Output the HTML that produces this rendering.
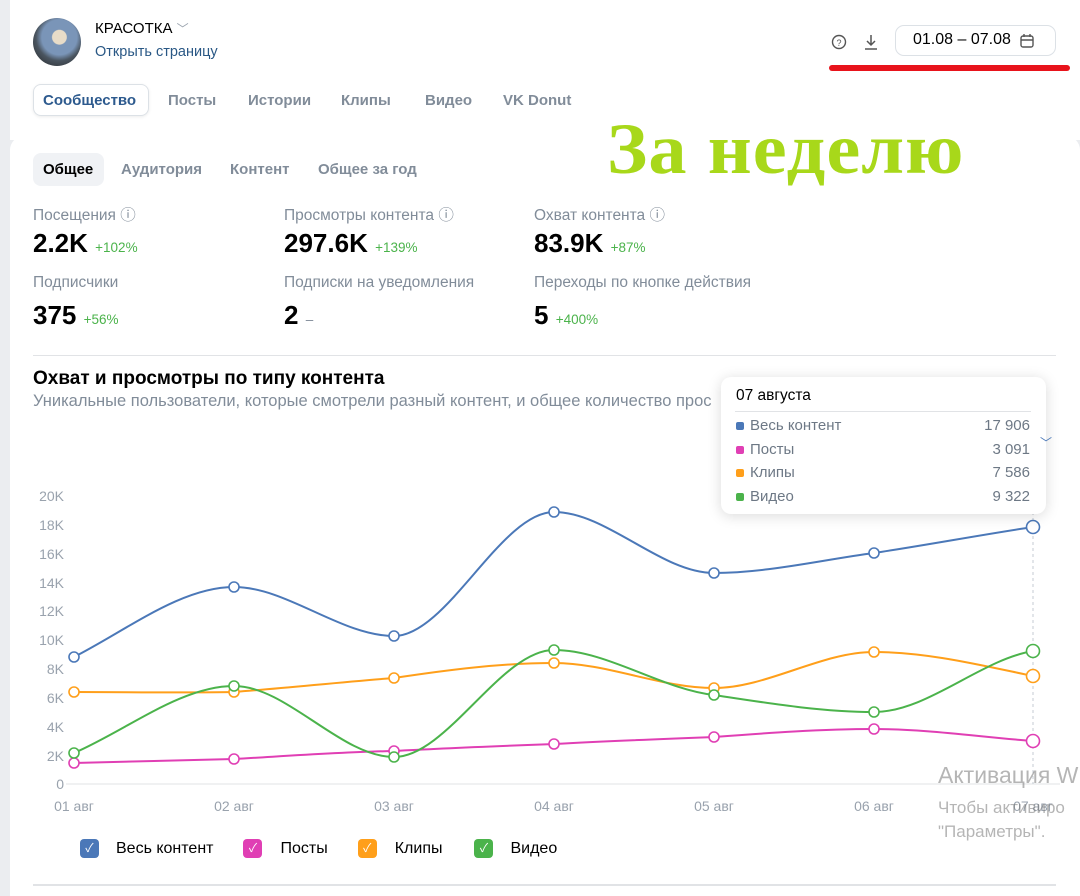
<!DOCTYPE html><html><head><meta charset="utf-8"><style>
*{margin:0;padding:0;box-sizing:border-box}
body{width:1080px;height:892px;overflow:hidden;background:#ebedf0;font-family:"Liberation Sans","Noto Sans CJK SC",sans-serif;position:relative}
.a{position:absolute;white-space:nowrap}
.top{position:absolute;left:10px;top:0;width:1070px;height:140px;background:#fff}
.card{position:absolute;left:10px;top:136px;width:1070px;height:760px;background:#fff;border-radius:14px 14px 0 0}
.g{color:#818c99;font-size:15.5px}
.big{font-size:26px;font-weight:bold;color:#000}
.pc{font-size:13.5px;color:#4bb34b;font-weight:normal}
.tab{font-size:15px;font-weight:bold;color:#818c99}
</style></head><body>
<div class="top"></div>
<div class="card"></div>
<div class="a" style="left:33px;top:18px;width:48px;height:48px;border-radius:50%;background:radial-gradient(circle at 55% 40%,#e8dcc8 0 18%,#7a95b8 20% 45%,#4a5560 60%,#202020 100%)"></div>
<div class="a" style="left:95px;top:20px;font-size:15px;color:#000">КРАСОТКА <span style="color:#99a2ad;font-size:12px">﹀</span></div>
<div class="a" style="left:95px;top:44px;font-size:14.5px;color:#2a5885">Открыть страницу</div>
<div class="a" style="left:33px;top:84px;width:116px;height:32px;border:1px solid #dce1e6;border-radius:8px;box-shadow:0 1px 3px rgba(0,0,0,.08)"></div>
<div class="a tab" style="left:43px;top:92px;color:#2d5a8e">Сообщество</div>
<div class="a tab" style="left:168px;top:92px">Посты</div>
<div class="a tab" style="left:248px;top:92px">Истории</div>
<div class="a tab" style="left:341px;top:92px">Клипы</div>
<div class="a tab" style="left:425px;top:92px">Видео</div>
<div class="a tab" style="left:503px;top:92px">VK Donut</div>
<svg class="a" style="left:830px;top:32px" width="54" height="20"><circle cx="9" cy="10" r="6.5" fill="none" stroke="#555" stroke-width="1.4"/><text x="9" y="14" font-size="9" text-anchor="middle" fill="#555" font-family="Liberation Sans">?</text><path d="M41 3v10M37 9l4 4 4-4M35 17h12" fill="none" stroke="#555" stroke-width="1.5"/></svg>
<div class="a" style="left:895px;top:25px;width:161px;height:31px;border:1px solid #dce1e6;border-radius:9px"></div>
<div class="a" style="left:913px;top:31px;font-size:16px;color:#000">01.08 – 07.08</div>
<svg class="a" style="left:1019px;top:33px" width="16" height="16"><rect x="2" y="3" width="12" height="11" rx="2" fill="none" stroke="#555" stroke-width="1.4"/><path d="M2 7h12M5 1v3M11 1v3" stroke="#555" stroke-width="1.4"/></svg>
<div class="a" style="left:829px;top:65px;width:241px;height:6px;background:#e8131b;border-radius:3px"></div>
<div class="a" style="left:607px;top:108px;font-family:'Liberation Serif',serif;font-weight:bold;font-size:72px;letter-spacing:1px;transform:scaleX(1.06);transform-origin:left;color:#a8d81a">За неделю</div>
<div class="a" style="left:33px;top:153px;width:71px;height:33px;background:#f0f2f5;border-radius:8px"></div>
<div class="a tab" style="left:43px;top:161px;color:#000">Общее</div>
<div class="a tab" style="left:121px;top:161px">Аудитория</div>
<div class="a tab" style="left:230px;top:161px">Контент</div>
<div class="a tab" style="left:318px;top:161px">Общее за год</div>
<div class="a g" style="left:33px;top:203px">Посещения ⓘ</div>
<div class="a big" style="left:33px;top:228px">2.2K <span class="pc">+102%</span></div>
<div class="a g" style="left:284px;top:203px">Просмотры контента ⓘ</div>
<div class="a big" style="left:284px;top:228px">297.6K <span class="pc">+139%</span></div>
<div class="a g" style="left:534px;top:203px">Охват контента ⓘ</div>
<div class="a big" style="left:534px;top:228px">83.9K <span class="pc">+87%</span></div>
<div class="a g" style="left:33px;top:274px">Подписчики</div>
<div class="a big" style="left:33px;top:300px">375 <span class="pc">+56%</span></div>
<div class="a g" style="left:284px;top:274px">Подписки на уведомления</div>
<div class="a big" style="left:284px;top:300px">2 <span class="pc" style="color:#818c99">–</span></div>
<div class="a g" style="left:534px;top:274px">Переходы по кнопке действия</div>
<div class="a big" style="left:534px;top:300px">5 <span class="pc">+400%</span></div>
<div class="a" style="left:33px;top:355px;width:1023px;height:1px;background:#e1e3e6"></div>
<div class="a" style="left:33px;top:368px;font-size:19px;font-weight:bold;color:#000">Охват и просмотры по типу контента</div>
<div class="a g" style="left:33px;top:392px;font-size:16.5px">Уникальные пользователи, которые смотрели разный контент, и общее количество прос</div>
<svg class="a" style="left:0;top:470px" width="1080" height="360" viewBox="0 470 1080 360" font-family="Liberation Sans" font-size="14" fill="#99a2ad">
<g text-anchor="end"><text x="64" y="501">20K</text><text x="64" y="530">18K</text><text x="64" y="559">16K</text><text x="64" y="588">14K</text><text x="64" y="616">12K</text><text x="64" y="645">10K</text><text x="64" y="674">8K</text><text x="64" y="703">6K</text><text x="64" y="732">4K</text><text x="64" y="761">2K</text><text x="64" y="789">0</text></g>
<line x1="66" y1="784" x2="1060" y2="784" stroke="#e1e3e6"/>
<line x1="1033" y1="500" x2="1033" y2="784" stroke="#c5cbd3" stroke-dasharray="3 3"/>
<g text-anchor="middle"><text x="74" y="811">01 авг</text><text x="234" y="811">02 авг</text><text x="394" y="811">03 авг</text><text x="554" y="811">04 авг</text><text x="714" y="811">05 авг</text><text x="874" y="811">06 авг</text><text x="1033" y="811">07 авг</text></g>
<g fill="none" stroke-width="2">
<path stroke="#4b78b8" d="M74 657 C127 630 181 587 234 587 C287 587 341 636 394 636 C447 636 501 512 554 512 C607 512 661 573 714 573 C767 573 821 560 874 553 C927 545 980 535 1033 527"/>
<path stroke="#e03fb4" d="M74 763 C127 762 181 760 234 759 C287 756 341 752 394 751 C447 748 501 746 554 744 C607 741 661 739 714 737 C767 733 821 729 874 729 C927 729 980 737 1033 741"/>
<path stroke="#ff9f1a" d="M74 692 C127 692 181 693 234 692 C287 688 341 682 394 678 C447 670 501 663 554 663 C607 663 661 688 714 688 C767 688 821 652 874 652 C927 652 980 665 1033 676"/>
<path stroke="#4bb34b" d="M74 753 C127 730 181 686 234 686 C287 686 341 757 394 757 C447 757 501 650 554 650 C607 650 661 689 714 695 C767 703 821 712 874 712 C927 712 980 660 1033 651"/>
</g>
<g fill="#fff" stroke-width="1.6">
<g stroke="#4b78b8"><circle cx="74" cy="657" r="5"/><circle cx="234" cy="587" r="5"/><circle cx="394" cy="636" r="5"/><circle cx="554" cy="512" r="5"/><circle cx="714" cy="573" r="5"/><circle cx="874" cy="553" r="5"/><circle cx="1033" cy="527" r="6.5"/></g>
<g stroke="#e03fb4"><circle cx="74" cy="763" r="5"/><circle cx="234" cy="759" r="5"/><circle cx="394" cy="751" r="5"/><circle cx="554" cy="744" r="5"/><circle cx="714" cy="737" r="5"/><circle cx="874" cy="729" r="5"/><circle cx="1033" cy="741" r="6.5"/></g>
<g stroke="#ff9f1a"><circle cx="74" cy="692" r="5"/><circle cx="234" cy="692" r="5"/><circle cx="394" cy="678" r="5"/><circle cx="554" cy="663" r="5"/><circle cx="714" cy="688" r="5"/><circle cx="874" cy="652" r="5"/><circle cx="1033" cy="676" r="6.5"/></g>
<g stroke="#4bb34b"><circle cx="74" cy="753" r="5"/><circle cx="234" cy="686" r="5"/><circle cx="394" cy="757" r="5"/><circle cx="554" cy="650" r="5"/><circle cx="714" cy="695" r="5"/><circle cx="874" cy="712" r="5"/><circle cx="1033" cy="651" r="6.5"/></g>
</g>
</svg>
<div class="a" style="left:721px;top:377px;width:325px;height:137px;background:#fff;border-radius:10px;box-shadow:0 2px 14px rgba(0,0,0,.15);font-size:15px;color:#6d7885">
<div class="a" style="left:15px;top:10px;color:#000;font-size:15.5px">07 августа</div>
<div class="a" style="left:14px;top:34px;width:296px;height:1px;background:#e1e3e6"></div>
<div class="a" style="left:15px;top:37px;line-height:23.5px">
<div><span style="display:inline-block;width:8px;height:8px;border-radius:2px;background:#4b78b8;margin-right:6px"></span>Весь контент</div>
<div><span style="display:inline-block;width:8px;height:8px;border-radius:2px;background:#e03fb4;margin-right:6px"></span>Посты</div>
<div><span style="display:inline-block;width:8px;height:8px;border-radius:2px;background:#ff9f1a;margin-right:6px"></span>Клипы</div>
<div><span style="display:inline-block;width:8px;height:8px;border-radius:2px;background:#4bb34b;margin-right:6px"></span>Видео</div></div>
<div class="a" style="right:16px;top:37px;line-height:23.5px;text-align:right"><div>17 906</div><div>3 091</div><div>7 586</div><div>9 322</div></div>
</div>
<div class="a" style="left:1040px;top:434px;color:#4b78b8;font-size:12px">﹀</div>
<div class="a" style="left:80px;top:839px;font-size:16px;color:#000;display:flex;align-items:center">
<span style="width:19px;height:19px;border-radius:4px;background:#4b78b8;color:#fff;font-size:12px;text-align:center;line-height:19px">✓</span><span style="margin:0 30px 0 17px">Весь контент</span>
<span style="width:19px;height:19px;border-radius:4px;background:#e03fb4;color:#fff;font-size:12px;text-align:center;line-height:19px">✓</span><span style="margin:0 30px 0 18px">Посты</span>
<span style="width:19px;height:19px;border-radius:4px;background:#ff9f1a;color:#fff;font-size:12px;text-align:center;line-height:19px">✓</span><span style="margin:0 32px 0 18px">Клипы</span>
<span style="width:19px;height:19px;border-radius:4px;background:#4bb34b;color:#fff;font-size:12px;text-align:center;line-height:19px">✓</span><span style="margin:0 0 0 17px">Видео</span></div>
<div class="a" style="left:33px;top:884px;width:1023px;height:2px;background:#e1e3e6"></div>
<div class="a" style="left:938px;top:762px;font-size:23px;color:rgba(120,120,120,.55)">Активация W</div>
<div class="a" style="left:938px;top:796px;font-size:17px;color:rgba(120,120,120,.55);line-height:24px">Чтобы активиро<br>"Параметры".</div>
</body></html>
